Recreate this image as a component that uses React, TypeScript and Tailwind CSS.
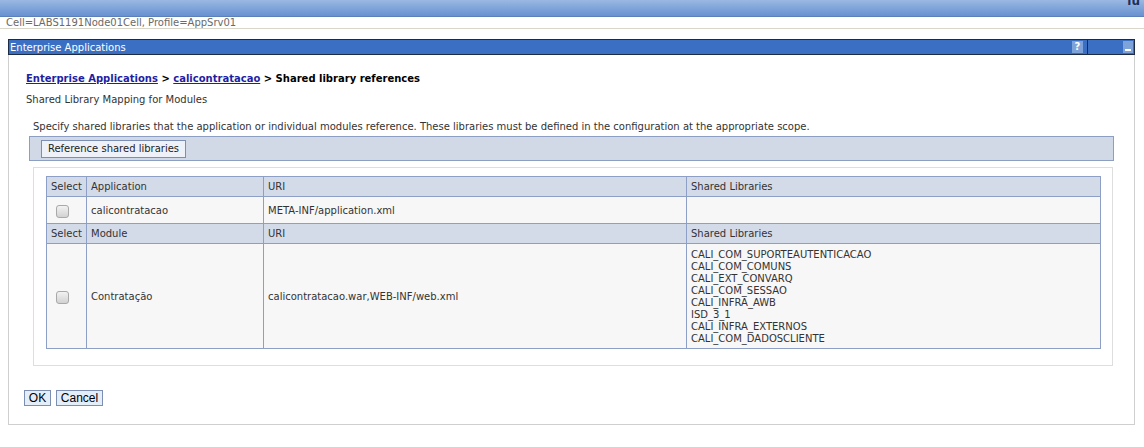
const libraries = [
  "CALI_COM_SUPORTEAUTENTICACAO",
  "CALI_COM_COMUNS",
  "CALI_EXT_CONVARQ",
  "CALI_COM_SESSAO",
  "CALI_INFRA_AWB",
  "ISD_3_1",
  "CALI_INFRA_EXTERNOS",
  "CALI_COM_DADOSCLIENTE",
];

function Checkbox() {
  return (
    <span className="inline-block w-[13px] h-[13px] rounded-[3px] border border-[#a9a9a9] bg-gradient-to-b from-[#f2f2f2] to-[#d2d2d2]" />
  );
}

function HeaderRow({ second }: { second: string }) {
  return (
    <tr className="h-[20px] bg-[#d3dbe9]">
      <td className="border border-[#8d9fc5] px-[4px]">Select</td>
      <td className="border border-[#8d9fc5] px-[4px]">{second}</td>
      <td className="border border-[#8d9fc5] px-[4px]">URI</td>
      <td className="border border-[#8d9fc5] px-[4px]">Shared Libraries</td>
    </tr>
  );
}

export default function App() {
  return (
    <div className="w-[1144px] h-[447px] bg-white overflow-hidden font-['DejaVu_Sans',Verdana,sans-serif] text-[10px] text-[#333]">
      {/* top banner */}
      <div className="h-[17px] bg-gradient-to-b from-[#9ab8e2] to-[#6791cf] border-b border-[#5b80bb] flex justify-end pr-[4px]">
        <span className="text-[12px] leading-[12px] -mt-[5px] text-[#1d2f58] font-bold">ıu</span>
      </div>
      <div className="h-[12px] leading-[11px] pl-[6px] text-[#6a6a6a] border-b border-[#d9d6ca]">
        Cell=LABS1191Node01Cell, Profile=AppSrv01
      </div>

      {/* panel */}
      <div className="ml-[8px] mt-[10px] w-[1127px]">
        <div className="h-[16px] bg-[#3b6fc4] border border-[#1d2b45] flex items-center text-white">
          <span className="pl-[1px] flex-1">Enterprise Applications</span>
          <span className="w-[11px] h-[12px] bg-[#7ea3da] text-white font-bold text-[10px] leading-[12px] text-center mr-[4px]">?</span>
          <span className="h-full border-l border-[#1d2b45] w-[47px] flex justify-end items-center pr-[1px]">
            <span className="w-[10px] h-[12px] bg-[#7ea3da] flex items-end justify-center pb-[2px]">
              <span className="w-[6px] h-[2px] bg-white" />
            </span>
          </span>
        </div>

        <div className="h-[370px] border-l border-r border-b border-[#cfcfcf] flex flex-col">
          <div className="mt-[17px] ml-[17px] font-bold leading-[13px] text-black">
            <a className="text-[#1f1fa3] underline">Enterprise Applications</a>
            {" > "}
            <a className="text-[#1f1fa3] underline">calicontratacao</a>
            {" > Shared library references"}
          </div>
          <div className="mt-[8px] ml-[17px] leading-[13px]">Shared Library Mapping for Modules</div>
          <div className="mt-[14px] ml-[24px] leading-[13px]">
            Specify shared libraries that the application or individual modules reference. These libraries must be defined in the configuration at the appropriate scope.
          </div>

          <div className="mt-[3px] ml-[20px] w-[1085px] h-[25px] bg-[#d1d9e7] border border-[#8c9ec1] flex items-center pl-[11px]">
            <button className="h-[18px] w-[145px] bg-[#eef2f8] border border-[#7c8fb3] text-[#222] text-[10px] leading-[14px] whitespace-nowrap">
              Reference shared libraries
            </button>
          </div>

          <div className="mt-[6px] ml-[24px] w-[1080px] border border-[#dedede] pt-[8px] pb-[16px] pl-[12px]">
            <table className="w-[1054px] border-collapse table-fixed">
              <colgroup>
                <col className="w-[40px]" />
                <col className="w-[177px]" />
                <col className="w-[423px]" />
                <col className="w-[414px]" />
              </colgroup>
              <tbody>
                <HeaderRow second="Application" />
                <tr className="h-[27px] bg-[#f7f7f7]">
                  <td className="border border-[#8d9fc5] pl-[9px]">
                    <span className="flex pt-[2px]"><Checkbox /></span>
                  </td>
                  <td className="border border-[#8d9fc5] px-[4px]">calicontratacao</td>
                  <td className="border border-[#8d9fc5] px-[4px]">META-INF/application.xml</td>
                  <td className="border border-[#8d9fc5] px-[4px]"></td>
                </tr>
                <HeaderRow second="Module" />
                <tr className="h-[104px] bg-[#f7f7f7]">
                  <td className="border border-[#8d9fc5] pl-[9px]">
                    <span className="flex pt-[2px]"><Checkbox /></span>
                  </td>
                  <td className="border border-[#8d9fc5] px-[4px]">Contratação</td>
                  <td className="border border-[#8d9fc5] px-[4px]">calicontratacao.war,WEB-INF/web.xml</td>
                  <td className="border border-[#8d9fc5] px-[4px] pt-[5px] pb-[3px] leading-[12px]">
                    {libraries.map((l) => (
                      <div key={l}>{l}</div>
                    ))}
                  </td>
                </tr>
              </tbody>
            </table>
          </div>

          <div className="mt-[24px] ml-[15px] flex gap-[5px] text-[12px] text-black font-['Liberation_Sans',Arial,sans-serif]">
            <button className="h-[16px] w-[27px] bg-[#e4eef9] border border-[#7c8fb3] leading-[13px]">OK</button>
            <button className="h-[16px] w-[47px] bg-[#e4eef9] border border-[#7c8fb3] leading-[13px]">Cancel</button>
          </div>
        </div>
      </div>
    </div>
  );
}
